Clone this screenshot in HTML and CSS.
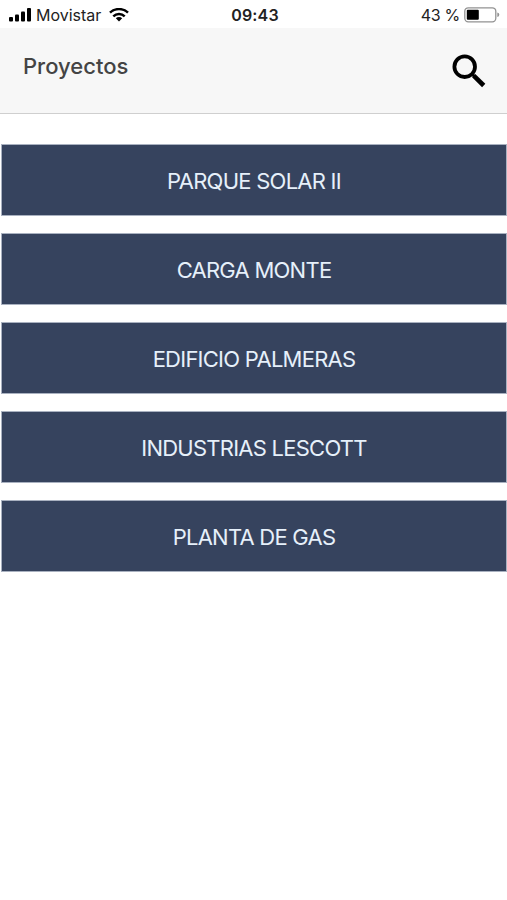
FILE: index.html
```html
<!DOCTYPE html>
<html lang="es">
<head>
    <meta charset="UTF-8">
    <meta name="viewport" content="width=device-width, initial-scale=1.0">
    <title>Proyectos</title>
    <link rel="stylesheet" href="styles.css">
</head>
<body>
    <div class="status-bar">
        <div class="status-left">
            <svg class="signal" width="24" height="14" viewBox="0 0 24 14">
                <rect x="0" y="9" width="4" height="4.500" rx="1"/>
                <rect x="6" y="6.500" width="4" height="7" rx="1"/>
                <rect x="12" y="3.500" width="4" height="10" rx="1"/>
                <rect x="18" y="0" width="4" height="13.500" rx="1"/>
            </svg>
            <span class="carrier">Movistar</span>
            <svg class="wifi" width="20" height="14" viewBox="0 0 20 14" fill="none" stroke="#000" stroke-width="2.500">
                <path d="M1 4.700a13 13 0 0 1 18 0"/>
                <path d="M4.300 8.300a8.200 8.200 0 0 1 11.400 0"/>
                <path d="M10 13.500l-3.200-3.200a4.600 4.600 0 0 1 6.400 0z" fill="#000" stroke="none"/>
            </svg>
        </div>
        <span class="time">09:43</span>
        <div class="status-right">
            <span class="percent">43 %</span>
            <svg class="battery" width="36" height="16" viewBox="0 0 36 16">
                <rect x="0.800" y="0.800" width="31" height="14" rx="3.500" fill="#fff" stroke="#929292" stroke-width="1.300"/>
                <rect x="2.800" y="2.800" width="12" height="10" rx="1" fill="#000"/>
                <path d="M33.300 5.500q2 .6 2 2.300t-2 2.300z" fill="#929292"/>
            </svg>
        </div>
    </div>

    <header class="header">
        <h1>Proyectos</h1>
        <button class="search" aria-label="Buscar">
            <svg width="34" height="34" viewBox="0 0 34 34" fill="none" stroke="#000">
                <circle cx="12.700" cy="12.700" r="10.300" stroke-width="3.800"/>
                <path d="M20.500 20.500l2 2" stroke-width="3"/>
                <path d="M21.700 21.700l10 9.800" stroke-width="4.600"/>
            </svg>
        </button>
    </header>

    <main class="projects">
        <button class="project">PARQUE SOLAR II</button>
        <button class="project">CARGA MONTE</button>
        <button class="project">EDIFICIO PALMERAS</button>
        <button class="project">INDUSTRIAS LESCOTT</button>
        <button class="project">PLANTA DE GAS</button>
    </main>
</body>
</html>
```

FILE: styles.css
```css
* {
    box-sizing: border-box;
}

body {
    margin: 0;
    background: #fff;
    font-family: Inter, "Liberation Sans", sans-serif;
}

/* Status bar */
.status-bar {
    display: grid;
    grid-template-columns: 1fr auto 1fr;
    align-items: center;
    height: 28px;
    padding: 2px 7px 0 9px;
    font-size: 16px;
    line-height: 20px;
    color: #222;
}

.status-left,
.status-right {
    display: flex;
    align-items: center;
}

.status-right {
    justify-content: flex-end;
}

.carrier {
    margin-left: 3px;
}

.wifi {
    margin-left: 8px;
}

.time {
    padding-left: 1px;
    font-weight: 600;
    letter-spacing: 0.2px;
}

.percent {
    margin-right: 4px;
    letter-spacing: -0.3px;
}

/* Header */
.header {
    display: flex;
    justify-content: space-between;
    align-items: flex-start;
    height: 86px;
    padding: 24px 21px 0 23px;
    background: #f7f7f7;
    border-bottom: 1px solid #cfcfcf;
}

.header h1 {
    margin: 0;
    font-size: 22px;
    line-height: 28px;
    font-weight: 500;
    color: #444;
}

.search {
    height: 34px;
    margin-top: 2px;
    padding: 0;
    border: none;
    background: none;
}

.search svg {
    display: block;
}

/* Project list */
.projects {
    display: flex;
    flex-direction: column;
    gap: 17px;
    padding: 30px 0 0 1px;
}

.project {
    height: 72px;
    padding: 1px 0 0;
    border: 1px solid #a9b1c0;
    background: #36435e;
    color: #e6f0fa;
    font-family: inherit;
    font-size: 22px;
    line-height: 28px;
    letter-spacing: -0.75px;
}
```
